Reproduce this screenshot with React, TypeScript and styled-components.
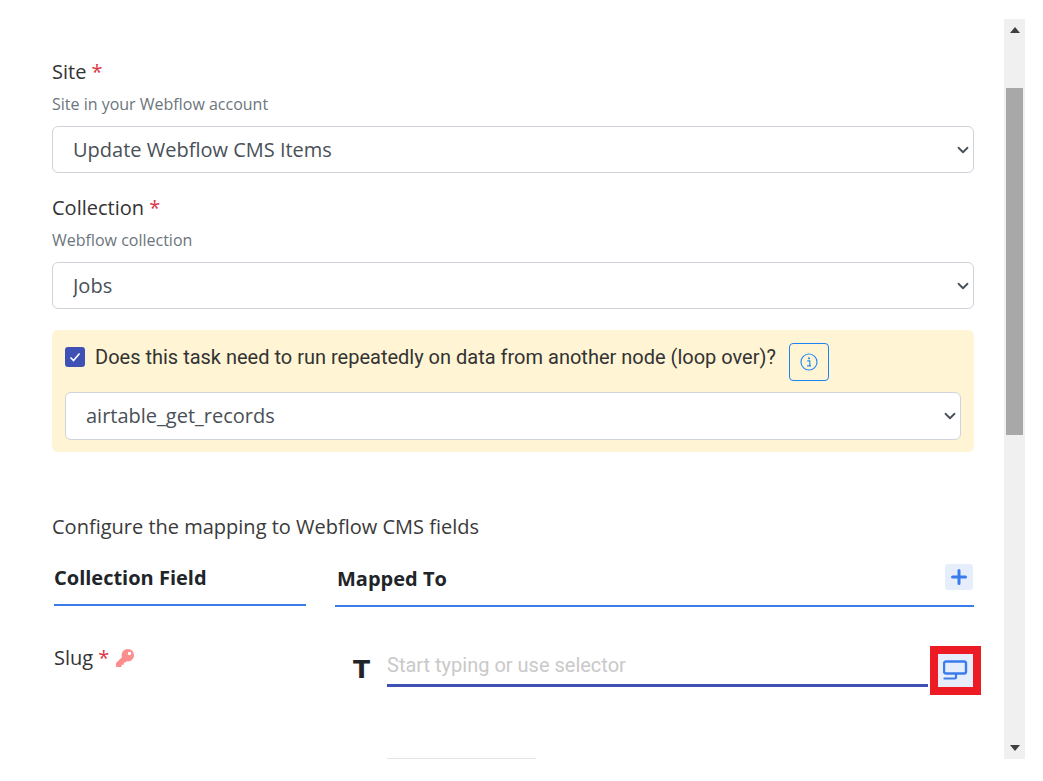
import React from 'react';
import styled, { createGlobalStyle } from 'styled-components';
import { FaKey } from 'react-icons/fa';

const Global = createGlobalStyle`
  html, body { margin: 0; padding: 0; background: #fff; height: 100%; overflow: hidden; }
  * { box-sizing: border-box; }
`;

const chevron =
  "data:image/svg+xml,%3csvg xmlns='http://www.w3.org/2000/svg' viewBox='0 0 16 16'%3e%3cpath fill='none' stroke='%23495057' stroke-linecap='round' stroke-linejoin='round' stroke-width='2.4' d='M2 5l6 6 6-6'/%3e%3c/svg%3e";

const Page = styled.div`
  display: flex;
  width: 1025px;
  height: 740px;
  margin-top: 19px;
  overflow: hidden;
  font-family: 'Open Sans', sans-serif;
  color: #212529;
`;

const Content = styled.div`
  flex: 1;
  min-width: 0;
  padding: 40px 30px 0 52px;
  overflow: hidden;
`;

const Scrollbar = styled.div`
  width: 21px;
  height: 740px;
  background: #f0f0f0;
  display: flex;
  flex-direction: column;
  align-items: center;
`;

const ArrowBox = styled.div`
  height: 22px;
  width: 100%;
  display: flex;
  align-items: center;
  justify-content: center;
`;

const Thumb = styled.div`
  width: 17px;
  height: 347px;
  margin-top: 47px;
  background: #a8a8a8;
`;

const Spacer = styled.div`
  flex: 1;
`;

const Label = styled.div`
  font-size: 20px;
  line-height: 25px;
  color: #333;
`;

const Req = styled.span`
  color: #dc3545;
`;

const Hint = styled.div`
  font-size: 16px;
  line-height: 22px;
  margin-top: 9px;
  color: #6c757d;
`;

const Select = styled.select`
  display: block;
  width: 100%;
  height: 47px;
  margin-top: 11px;
  padding: 0 36px 0 20px;
  appearance: none;
  border: 1px solid #ced4da;
  border-radius: 6px;
  background: #fff url("${chevron}") no-repeat right 3px center / 14px 12px;
  font-family: 'Open Sans', sans-serif;
  font-size: 20px;
  color: #495057;
`;

const Group = styled.div`
  margin-bottom: 22px;
`;

const LoopBox = styled.div`
  margin-top: -1px;
  height: 122px;
  padding: 13px 13px 0;
  border-radius: 6px;
  background: #fff4d3;
`;

const LoopRow = styled.div`
  display: flex;
  align-items: flex-start;
  height: 49px;
`;

const Check = styled.span`
  width: 20px;
  height: 20px;
  margin-top: 4px;
  border-radius: 3px;
  background: #3f51b5;
  display: flex;
  align-items: center;
  justify-content: center;
  flex: none;
`;

const LoopText = styled.span`
  margin: 1px 0 0 10px;
  font-family: Roboto, sans-serif;
  font-size: 20px;
  line-height: 27px;
  color: #333;
  white-space: nowrap;
`;

const InfoButton = styled.span`
  width: 40px;
  height: 38px;
  margin-left: 13px;
  border: 1px solid #1a84f5;
  border-radius: 4px;
  display: flex;
  align-items: center;
  justify-content: center;
  flex: none;
`;

const LoopSelect = styled(Select)`
  margin-top: 0;
  height: 48px;
  padding-bottom: 2px;
`;

const Intro = styled.div`
  margin-top: 61px;
  font-size: 20px;
  line-height: 27px;
  color: #3a3a3a;
`;

const HeadRow = styled.div`
  display: flex;
  margin-top: 15px;
`;

const HeadLeft = styled.div`
  width: 252px;
  height: 51px;
  margin-left: 2px;
  border-bottom: 2px solid #3b7cec;
  font-size: 20px;
  font-weight: 700;
  line-height: 46px;
  color: #212529;
`;

const HeadRight = styled.div`
  flex: 1;
  height: 52px;
  margin-left: 29px;
  padding: 0 1px 4px 2px;
  border-bottom: 2px solid #3b7cec;
  display: flex;
  align-items: center;
  justify-content: space-between;
  font-size: 20px;
  font-weight: 700;
  color: #212529;
`;

const IconButton = styled.span`
  width: 28px;
  height: 26px;
  border-radius: 3px;
  background: #e7eefb;
  display: flex;
  align-items: center;
  justify-content: center;
  margin-bottom: 2px;
`;

const FieldRow = styled.div`
  display: flex;
  margin-top: 40px;
`;

const FieldName = styled.div`
  width: 290px;
  margin-top: -3px;
  padding-left: 2px;
  display: flex;
  align-items: center;
  align-self: flex-start;
  gap: 7px;
  font-size: 20px;
  line-height: 27px;
  color: #333;
  flex: none;
`;

const TypeGlyph = styled.span`
  width: 45px;
  padding: 7px 0 0 11px;
  font-family: 'DejaVu Sans', sans-serif;
  font-size: 25px;
  font-weight: 700;
  line-height: 32px;
  color: #212529;
  flex: none;
`;

const InputLine = styled.div`
  width: 541px;
  height: 40px;
  border-bottom: 3px solid #3f51b5;
  font-family: Roboto, sans-serif;
  font-size: 20px;
  line-height: 36px;
  color: #c9c9c9;
  flex: none;
`;

const Highlight = styled.span`
  width: 51px;
  height: 49px;
  margin: -1px 0 0 2px;
  border: 8px solid #ed1c24;
  background: #e7eefb;
  display: flex;
  align-items: center;
  justify-content: center;
  flex: none;
`;

const NextRow = styled.div`
  width: 149px;
  margin: 63px 0 0 335px;
  border-top: 1px solid #e4e4e4;
`;

const Tri = ({ up }: { up?: boolean }) => (
  <svg width="10" height="6" viewBox="0 0 10 6">
    <path d={up ? 'M0 6L5 0l5 6z' : 'M0 0l5 6 5-6z'} fill="#404040" />
  </svg>
);

export default function App() {
  return (
    <>
      <Global />
      <Page>
        <Content>
          <Group>
            <Label>Site <Req>*</Req></Label>
            <Hint>Site in your Webflow account</Hint>
            <Select defaultValue="a"><option value="a">Update Webflow CMS Items</option></Select>
          </Group>
          <Group>
            <Label>Collection <Req>*</Req></Label>
            <Hint>Webflow collection</Hint>
            <Select defaultValue="a"><option value="a">Jobs</option></Select>
          </Group>
          <LoopBox>
            <LoopRow>
              <Check>
                <svg width="14" height="14" viewBox="0 0 14 14">
                  <path d="M2.5 7.5l3 3 6-7" fill="none" stroke="#fff" strokeWidth="1.6" />
                </svg>
              </Check>
              <LoopText>Does this task need to run repeatedly on data from another node (loop over)?</LoopText>
              <InfoButton>
                <svg width="18" height="18" viewBox="0 0 18 18">
                  <circle cx="9" cy="9" r="8" fill="none" stroke="#2b8df5" strokeWidth="1.2" />
                  <circle cx="9" cy="5.3" r="1.1" fill="#2b8df5" />
                  <path d="M7.2 7.8H9.8V12.6H11M7 12.8H11" fill="none" stroke="#2b8df5" strokeWidth="1.2" />
                </svg>
              </InfoButton>
            </LoopRow>
            <LoopSelect defaultValue="a"><option value="a">airtable_get_records</option></LoopSelect>
          </LoopBox>
          <Intro>Configure the mapping to Webflow CMS fields</Intro>
          <HeadRow>
            <HeadLeft>Collection Field</HeadLeft>
            <HeadRight>
              Mapped To
              <IconButton>
                <svg width="16" height="16" viewBox="0 0 16 16">
                  <path d="M8 1.5v13M1.5 8h13" stroke="#3b7cec" strokeWidth="3" strokeLinecap="round" />
                </svg>
              </IconButton>
            </HeadRight>
          </HeadRow>
          <FieldRow>
            <FieldName>
              <span>Slug <Req>*</Req></span>
              <FaKey size={18} color="#fb8f8f" />
            </FieldName>
            <TypeGlyph>T</TypeGlyph>
            <InputLine>Start typing or use selector</InputLine>
            <Highlight>
              <svg width="26" height="22" viewBox="0 0 26 22">
                <rect x="1" y="1.5" width="22" height="12" rx="2" fill="none" stroke="#3b7cec" strokeWidth="2.4" />
                <path d="M13 14v3.5a1 1 0 0 1-1 1H1.5" fill="none" stroke="#3b7cec" strokeWidth="2.2" strokeLinecap="round" />
              </svg>
            </Highlight>
          </FieldRow>
          <NextRow />
        </Content>
        <Scrollbar>
          <ArrowBox><Tri up /></ArrowBox>
          <Thumb />
          <Spacer />
          <ArrowBox><Tri /></ArrowBox>
        </Scrollbar>
      </Page>
    </>
  );
}
